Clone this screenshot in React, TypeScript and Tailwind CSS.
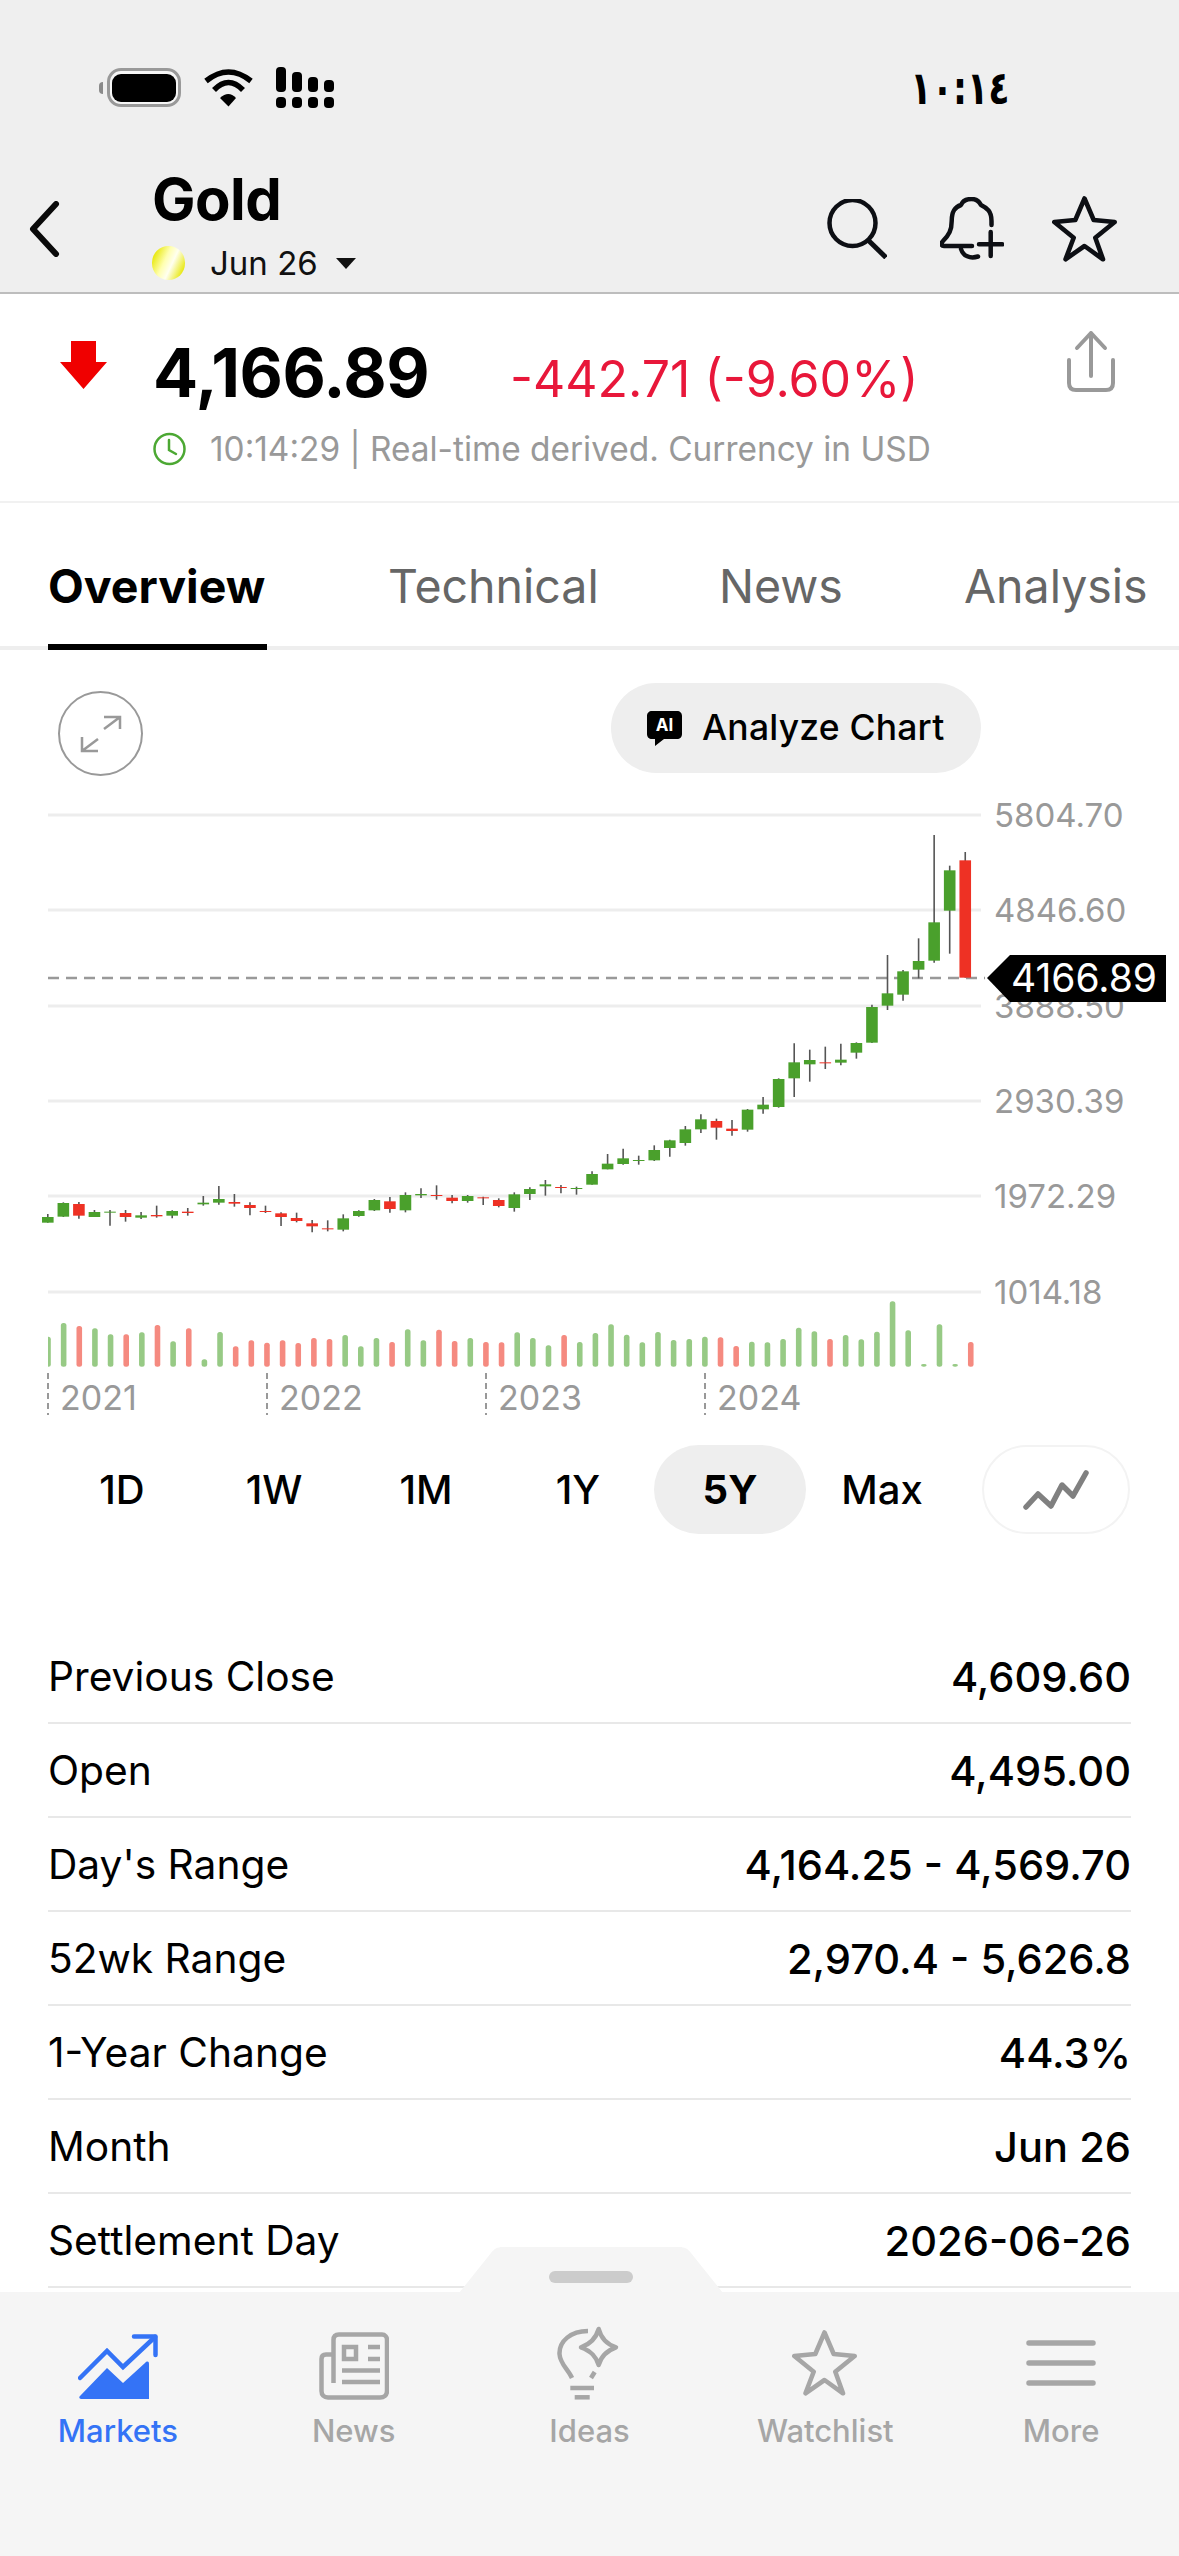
import { ReactNode } from "react";

// [bodyTop, bodyBottom, wickTop, wickBottom, up] in crop units: y = base + v / 3
type Candle = [number, number, number, number, number];

const CANDLES_A: Candle[] = [
  [231, 248, 222, 248, 1], [189, 230, 187, 231, 1], [192, 227, 186, 236, 0], [216, 231, 210, 231, 1],
  [215, 216, 210, 257, 1], [219, 231, 210, 245, 0], [226, 233, 216, 237, 1], [225, 229, 197, 233, 0],
  [213, 227, 211, 235, 1], [215, 219, 204, 227, 0], [188, 193, 168, 197, 1], [177, 188, 138, 194, 1],
  [186, 191, 162, 200, 0], [195, 204, 187, 226, 0], [213, 215, 197, 219, 0], [220, 231, 217, 258, 0],
  [234, 243, 218, 247, 0], [250, 259, 240, 277, 0], [265, 266, 241, 274, 0], [235, 269, 223, 274, 1],
  [213, 228, 211, 230, 1], [180, 211, 177, 213, 1], [184, 207, 171, 218, 0], [165, 211, 157, 217, 1],
  [162, 166, 145, 174, 1], [165, 166, 136, 179, 0], [173, 183, 165, 190, 0], [168, 183, 165, 188, 1],
  [172, 174, 170, 195, 0], [180, 198, 175, 202, 0], [163, 204, 157, 215, 1], [147, 162, 142, 180, 1],
  [133, 139, 120, 167, 1], [141, 143, 135, 160, 0], [144, 146, 140, 164, 1],
];
const CANDLES_B: Candle[] = [
  [402, 434, 394, 434, 1], [371, 388, 342, 388, 1], [355, 372, 326, 374, 1], [360, 361, 347, 374, 1],
  [330, 361, 316, 363, 1], [301, 324, 299, 350, 1], [268, 309, 258, 317, 1], [238, 268, 223, 279, 1],
  [243, 263, 236, 299, 0], [266, 273, 240, 287, 0], [209, 269, 207, 275, 1], [194, 208, 171, 221, 1],
  [117, 201, 115, 203, 1], [67, 115, 10, 171, 1], [60, 73, 29, 125, 1], [67, 68, 20, 87, 0],
  [59, 68, 11, 76, 1], [9, 38, 7, 56, 1],
];
const CANDLES_C: Candle[] = [
  [1101, 1208, 1094, 1209, 1], [1060, 1097, 945, 1110, 1], [994, 1064, 990, 1082, 1], [963, 989, 895, 1015, 1],
  [847, 962, 585, 968, 1], [691, 812, 677, 941, 1], [661, 1013, 636, 1013, 0],
];

const toReal = (list: Candle[], base: number): Candle[] =>
  list.map(([a, b, c, d, up]) => [base + a / 3, base + b / 3, base + c / 3, base + d / 3, up]);

const CANDLES = [...toReal(CANDLES_A, 1140), ...toReal(CANDLES_B, 1040), ...toReal(CANDLES_C, 640)];

// top of each volume bar, y = 1140 + v / 3 for the first 35, y = 1040 + v / 3 after
const VOL_A = [590, 549, 558, 565, 583, 583, 577, 555, 604, 565, 658, 576, 619, 601, 608, 601, 609, 594, 597, 585, 619, 594, 606, 568, 601, 569, 603, 594, 606, 607, 577, 594, 616, 585, 606];
const VOL_B = [879, 853, 884, 907, 876, 900, 897, 890, 892, 918, 905, 907, 897, 863, 874, 897, 885, 898, 875, 784, 871, 972, 853, 972, 906];
const VOL_RED = new Set([2, 5, 7, 9, 12, 13, 14, 15, 16, 17, 18, 22, 25, 26, 28, 29, 33, 43, 44, 50, 59]);
const VOLUMES = [...VOL_A.map((v) => 1140 + v / 3), ...VOL_B.map((v) => 1040 + v / 3)];

const GRID = [
  { y: 815, label: "5804.70" },
  { y: 910, label: "4846.60" },
  { y: 1006, label: "3888.50" },
  { y: 1101, label: "2930.39" },
  { y: 1196, label: "1972.29" },
  { y: 1292, label: "1014.18" },
];

const YEARS = [
  { x: 48, label: "2021" },
  { x: 267, label: "2022" },
  { x: 486, label: "2023" },
  { x: 705, label: "2024" },
];

const RANGES = ["1D", "1W", "1M", "1Y", "5Y", "Max"];

const STATS = [
  ["Previous Close", "4,609.60"],
  ["Open", "4,495.00"],
  ["Day's Range", "4,164.25 - 4,569.70"],
  ["52wk Range", "2,970.4 - 5,626.8"],
  ["1-Year Change", "44.3%"],
  ["Month", "Jun 26"],
  ["Settlement Day", "2026-06-26"],
];

function StarIcon({ color }: { color: string }) {
  return (
    <svg width="66" height="66" viewBox="0 0 66 66" fill="none">
      <path
        d="M32.5 2.5 L41.7 24 L62.7 26 L43.3 41.7 L51 63.3 L32.5 50 L13.5 63.3 L21.7 41.7 L2.3 26 L23.3 24 Z"
        stroke={color}
        strokeWidth="4.6"
        strokeLinejoin="round"
      />
    </svg>
  );
}

function StatusBar() {
  return (
    <div className="mt-[67px] flex h-[41px] items-center pl-[99px] pr-[169px]">
      <div className="flex h-[39px] w-[82px] items-center">
        <div className="h-[12px] w-[4px] rounded-l-full bg-[#8a8a8a]" />
        <div className="ml-[4px] flex h-[39px] w-[74px] items-center justify-center rounded-[14px] border-[3px] border-[#999999] bg-[#f6f6f6]">
          <div className="h-[28px] w-[64px] rounded-[9px] bg-black" />
        </div>
      </div>
      <svg className="ml-[22px]" width="51" height="38" viewBox="0 0 51 38" fill="none">
        <path d="M3 12 Q25.5 -6 48 12" stroke="black" strokeWidth="5.5" />
        <path d="M11 21 Q25.5 6 40 21" stroke="black" strokeWidth="5.5" />
        <path d="M17 29 Q25.5 21 33 29 L25.5 37.5 Z" fill="black" />
      </svg>
      <svg className="ml-[22px]" width="58" height="41" viewBox="0 0 58 41" fill="black">
        <rect x="0" y="0" width="10" height="25" rx="4" />
        <rect x="16" y="5" width="10" height="20" rx="4" />
        <rect x="32" y="10" width="10" height="15" rx="4" />
        <rect x="48" y="13" width="10" height="12" rx="4" />
        <rect x="0" y="30" width="10" height="11" rx="4" />
        <rect x="16" y="30" width="10" height="11" rx="4" />
        <rect x="32" y="30" width="10" height="11" rx="4" />
        <rect x="48" y="30" width="10" height="11" rx="4" />
      </svg>
      <span dir="ltr" className="ml-auto origin-right scale-x-[0.76] font-['DejaVu_Sans',sans-serif] text-[46px] leading-none font-bold tracking-[-5px] text-black">
        ١٠:١٤
      </span>
    </div>
  );
}

function TopBar() {
  return (
    <div className="flex h-[123px] items-center pl-[29px] pr-[61px]">
      <svg width="31" height="56" viewBox="0 0 31 56" fill="none">
        <path d="M27 3 L4 28 L27 53" stroke="#0a0a0a" strokeWidth="6" strokeLinecap="round" strokeLinejoin="round" />
      </svg>
      <div className="mt-[3px] ml-[92px] flex flex-col self-start">
        <span className="text-[58px] leading-[58px] font-bold tracking-[-0.5px] text-black">Gold</span>
        <div className="mt-[15px] flex items-center">
          <div className="h-[34px] w-[33px] rounded-full bg-[linear-gradient(115deg,#e6e600_10%,#ffffb0_40%,#fffff0_58%,#e6e600_90%)]" />
          <span className="ml-[25px] text-[33px] leading-[40px] text-[#111]">Jun 26</span>
          <svg className="ml-[18px]" width="20" height="11" viewBox="0 0 20 11" fill="#111">
            <path d="M0 0 H20 L10 11 Z" />
          </svg>
        </div>
      </div>
      <div className="ml-auto flex items-center">
        <svg width="60" height="60" viewBox="0 0 60 60" fill="none" stroke="#0d0f14" strokeWidth="4.5">
          <circle cx="25.5" cy="24" r="23" />
          <path d="M41 41 L59 58.5" strokeWidth="5" />
        </svg>
        <svg className="ml-[53px]" width="64" height="64" viewBox="0 0 64 64" fill="none" stroke="#0d0f14" strokeWidth="4.5" strokeLinecap="round" strokeLinejoin="round">
          <path d="M32 49 H4 C1 49 1 46 3 44 C9 38 11.7 33 11.7 24 C11.7 14 15 10 21 8 C23 3 27 2 31.5 2 C36 2 39 4 41 8 C47 11 51.5 14 51.5 24 V28" />
          <path d="M21 52 C23 59 30 62 38 59.5" />
          <path d="M50.7 35 V59 M39 47.3 H62.3" />
        </svg>
        <div className="ml-[48px]">
          <StarIcon color="#0d0f14" />
        </div>
      </div>
    </div>
  );
}

function PriceBlock() {
  return (
    <section className="flex h-[209px] border-b-2 border-[#f1f1f1] pl-[60px] pr-[64px]">
      <svg className="mt-[47px]" width="47" height="48" viewBox="0 0 47 48" fill="#f00000">
        <path d="M11 0 H36 V21 H47 L23.5 48 L0 21 H11 Z" />
      </svg>
      <div className="ml-[46px] flex-1">
        <div className="mt-[47px] flex items-baseline">
          <span className="w-[357px] text-[66.8px] leading-[64px] font-bold tracking-[-0.5px] text-black">4,166.89</span>
          <span className="text-[50px] leading-[64px] text-[#e8173a]">-442.71 (-9.60%)</span>
        </div>
        <div className="mt-[18px] flex items-center">
          <svg width="33" height="34" viewBox="0 0 33 34" fill="none" stroke="#4ca833" strokeWidth="2.5" strokeLinecap="round">
            <circle cx="16.5" cy="17" r="15" />
            <path d="M16 8 V18 L23 22" />
          </svg>
          <span className="ml-[24px] text-[33.4px] leading-[40px] whitespace-nowrap text-[#999999]">
            10:14:29 | Real-time derived. Currency in USD
          </span>
        </div>
      </div>
      <svg className="mt-[36px]" width="48" height="62" viewBox="0 0 48 62" fill="none" stroke="#999999" strokeWidth="4" strokeLinecap="round" strokeLinejoin="round">
        <path d="M24 3 V46 M10 18 L24 3 L38 18" />
        <path d="M2 30 V53 C2 58 5 60 9 60 H39 C43 60 46 58 46 53 V30" />
      </svg>
    </section>
  );
}

function Tabs() {
  return (
    <div className="flex h-[147px] border-b-4 border-[#eeeeee] pt-[22px] pl-[48px] text-[46.5px] leading-[64px] whitespace-nowrap text-[#666666]">
      <div className="relative flex w-[340px] items-center">
        <span className="font-bold text-black">Overview</span>
        <div className="absolute -bottom-[4px] left-0 h-[6px] w-[219px] bg-black" />
      </div>
      <div className="flex w-[331px] items-center">Technical</div>
      <div className="flex w-[245px] items-center">News</div>
      <div className="flex items-center">Analysis</div>
    </div>
  );
}

function ChartActions() {
  return (
    <div className="flex h-[150px] items-start pl-[58px]">
      <div className="mt-[41px] flex h-[85px] w-[85px] items-center justify-center rounded-full border-[2.5px] border-[#999999]">
        <svg width="42" height="38" viewBox="0 0 42 38" fill="none" stroke="#999999" strokeWidth="2.5">
          <path d="M24 14 L40 2 M24 2 H40 V14" />
          <path d="M18 24 L2 36 M2 22 V36 H18" />
        </svg>
      </div>
      <div className="mt-[33px] ml-[468px] flex h-[90px] w-[370px] items-center rounded-full bg-[#eeeeee] pl-[36px]">
        <div className="relative h-[35px] w-[35px]">
          <svg className="absolute inset-0" width="35" height="35" viewBox="0 0 35 35" fill="black">
            <path d="M5 0 H30 C33 0 35 2 35 5 V23 C35 26 33 28 30 28 H17 L8 35 V28 H5 C2 28 0 26 0 23 V5 C0 2 2 0 5 0 Z" />
          </svg>
          <span className="absolute top-[5px] left-0 w-[35px] text-center text-[17px] leading-[18px] font-bold text-white">AI</span>
        </div>
        <span className="ml-[20px] text-[35.5px] leading-[44px] font-medium tracking-[0.2px] text-black">Analyze Chart</span>
      </div>
    </div>
  );
}

function Chart() {
  return (
    <svg className="block" width="1179" height="630" viewBox="0 800 1179 630">
      <defs>
        <clipPath id="volume-clip">
          <rect x="48" y="1280" width="940" height="100" />
        </clipPath>
      </defs>
      {GRID.map((g) => (
        <g key={g.label}>
          <line x1="48" x2="981" y1={g.y} y2={g.y} stroke="#ededed" strokeWidth="3" />
          <text x="994" y={g.y + 12} fontSize="33" fill="#999999">
            {g.label}
          </text>
        </g>
      ))}
      <line x1="48" x2="985" y1="978" y2="978" stroke="#999999" strokeWidth="2.5" strokeDasharray="11 7" />
      {CANDLES.map(([top, bottom, wickTop, wickBottom, up], i) => {
        const x = 47.8 + 15.55 * i;
        return (
          <g key={i}>
            <line x1={x} x2={x} y1={wickTop} y2={wickBottom} stroke="#555555" strokeWidth="1.6" />
            <rect x={x - 5.8} y={top} width="11.6" height={Math.max(bottom - top, 1)} fill={up ? "#4aa02c" : "#ee3124"} />
          </g>
        );
      })}
      <g clipPath="url(#volume-clip)">
        {VOLUMES.map((top, i) => (
          <rect
            key={i}
            x={48 + 15.64 * i - 2.8}
            y={top}
            width="5.6"
            height={1366.7 - top}
            rx="2.5"
            fill={VOL_RED.has(i) ? "#f58a80" : "#97ca85"}
          />
        ))}
      </g>
      {YEARS.map((y) => (
        <g key={y.label}>
          <line x1={y.x} x2={y.x} y1="1373" y2="1415" stroke="#999999" strokeWidth="2" strokeDasharray="6 4" />
          <text x={y.x + 12} y="1410" fontSize="34" fill="#999999">
            {y.label}
          </text>
        </g>
      ))}
      <path d="M987 978 L1010 955 H1166 V1002 H1010 Z" fill="black" />
      <text x="1011" y="992" fontSize="39" fill="white">
        4166.89
      </text>
    </svg>
  );
}

function RangeRow() {
  return (
    <div className="mt-[15px] flex h-[89px] pl-[46px]">
      <div className="grid w-[912px] grid-cols-6">
        {RANGES.map((r) => (
          <div
            key={r}
            className={
              r === "5Y"
                ? "flex items-center justify-center rounded-full bg-[#eeeeee] text-[40px] font-bold text-black"
                : "flex items-center justify-center text-[40px] font-medium text-black"
            }
          >
            {r}
          </div>
        ))}
      </div>
      <div className="ml-[24px] flex w-[148px] items-center justify-center rounded-full border-2 border-[#f3f3f3]">
        <svg width="66" height="40" viewBox="0 0 66 40" fill="none" stroke="#808080" strokeWidth="5.5" strokeLinecap="round" strokeLinejoin="round">
          <path d="M3 37 L15 24 L28 36 L39 15 L50 26 L63 3" />
        </svg>
      </div>
    </div>
  );
}

function StatsTable() {
  return (
    <div className="mt-[96px] flex flex-col px-[48px]">
      {STATS.map(([label, value]) => (
        <div key={label} className="flex h-[94px] items-center justify-between border-b-2 border-[#e8e8e8] pt-[2px] text-[40.7px] text-black">
          <span>{label}</span>
          <span className="text-[41.6px] font-medium">{value}</span>
        </div>
      ))}
    </div>
  );
}

function NavItem({ label, active, children }: { label: string; active?: boolean; children: ReactNode }) {
  return (
    <div className="flex flex-col items-center">
      <div className="flex h-[74px] items-end">{children}</div>
      <span className={active ? "mt-[13px] text-[31px] leading-[36px] font-medium text-[#3473f6]" : "mt-[13px] text-[31px] leading-[36px] font-medium text-[#a6a6a6]"}>
        {label}
      </span>
    </div>
  );
}

function BottomNav() {
  return (
    <nav className="relative h-[264px] shrink-0 bg-[#f5f5f5] pt-[34px]">
      <svg className="absolute -top-[45px] left-[459px]" width="264" height="46" viewBox="0 0 264 46" fill="#f5f5f5">
        <path d="M0 46 L32 6 C35 2 38 0 44 0 H220 C226 0 229 2 232 6 L264 46 Z" />
      </svg>
      <div className="absolute -top-[21px] left-[549px] h-[12px] w-[84px] rounded-full bg-[#cccccc]" />
      <div className="grid grid-cols-5">
        <NavItem label="Markets" active>
          <svg width="80" height="66" viewBox="0 0 80 66" fill="#3473f6">
            <path d="M2 44 L29 17 L45 33 L77 3" fill="none" stroke="#3473f6" strokeWidth="4.5" strokeLinecap="round" />
            <path d="M56 2.5 H77.5 V21" fill="none" stroke="#3473f6" strokeWidth="4.5" strokeLinecap="round" strokeLinejoin="round" />
            <path d="M2 62 L29 34 L45 49 L67 29 C69 27 71 27 71 30 V65 H4 C1.5 65 0.5 63.5 2 62 Z" />
          </svg>
        </NavItem>
        <NavItem label="News">
          <svg width="70" height="68" viewBox="0 0 70 68" fill="none" stroke="#a6a6a6" strokeWidth="4.5">
            <path d="M14.5 51 V8 C14.5 5 16 2.5 20 2.5 H63 C66 2.5 68 5 68 8 V59 C68 63 65 65.5 61 65.5 H9 C5 65.5 2.5 63 2.5 59 V27 C2.5 24 4 22.5 7 22.5 H14" />
            <rect x="25" y="15" width="12" height="12" />
            <path d="M49 15 H61 M49 27 H61" />
            <path d="M23 38.5 H61 M23 50 H61" />
          </svg>
        </NavItem>
        <NavItem label="Ideas">
          <svg width="64" height="74" viewBox="0 0 64 74" fill="none" stroke="#a6a6a6" strokeWidth="4.5">
            <path d="M31 5 C14 5 2 15 2.5 28 C3 38 11 43 15 52" />
            <path d="M37.7 46 L34 52" />
            <path d="M41.7 3 C44 12 49 18 59 21.3 C49 25 44 30 41.7 39 C39 30 34 25 24 21.3 C34 18 39 12 41.7 3 Z" strokeLinejoin="round" />
            <path d="M13.3 62 H37" />
            <path d="M17.7 71.3 H32.7" />
          </svg>
        </NavItem>
        <NavItem label="Watchlist">
          <div className="mb-[4px]">
            <StarIcon color="#a6a6a6" />
          </div>
        </NavItem>
        <NavItem label="More">
          <svg className="mb-[14px]" width="70" height="46" viewBox="0 0 70 46" fill="none" stroke="#a6a6a6" strokeWidth="5.5" strokeLinecap="round">
            <path d="M3 3 H67 M3 23 H67 M3 43 H67" />
          </svg>
        </NavItem>
      </div>
    </nav>
  );
}

export default function App() {
  return (
    <div className="flex h-[2556px] w-[1179px] flex-col overflow-hidden bg-white font-['Inter','Noto_Sans',sans-serif]">
      <header className="flex h-[294px] shrink-0 flex-col border-b-2 border-[#bdbdbd] bg-[#efefef]">
        <StatusBar />
        <div className="mt-[59px]">
          <TopBar />
        </div>
      </header>
      <main className="min-h-0 flex-1 overflow-hidden">
        <PriceBlock />
        <Tabs />
        <ChartActions />
        <Chart />
        <RangeRow />
        <StatsTable />
      </main>
      <BottomNav />
    </div>
  );
}
